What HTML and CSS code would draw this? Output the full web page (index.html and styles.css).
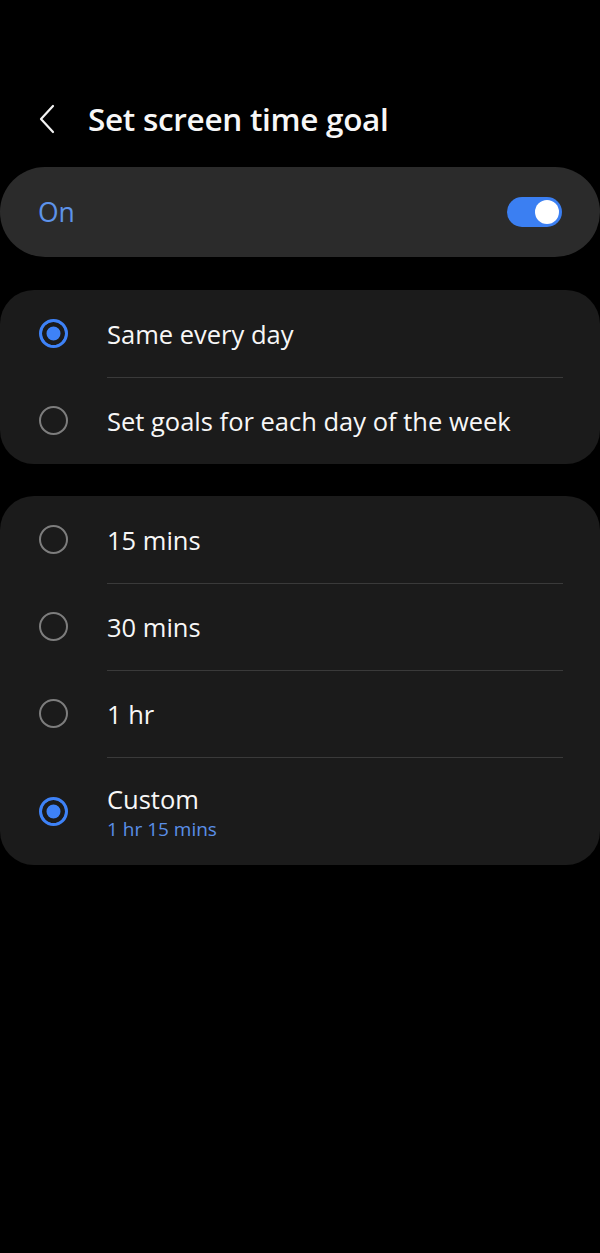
FILE: index.html
```html
<!DOCTYPE html>
<html lang="en">
<head>
    <meta charset="UTF-8">
    <meta name="viewport" content="width=device-width, initial-scale=1.0">
    <title>Set screen time goal</title>
    <link rel="stylesheet" href="styles.css">
</head>
<body>
    <div class="header">
        <svg class="back" width="20" height="30" viewBox="0 0 20 30">
            <path d="M15 2 L3 15 L15 28" fill="none" stroke="#f2f2f2" stroke-width="2.2" stroke-linecap="round" stroke-linejoin="round"/>
        </svg>
        <h1>Set screen time goal</h1>
    </div>

    <div class="master">
        <span class="master-label">On</span>
        <span class="switch"><span class="knob"></span></span>
    </div>

    <div class="card">
        <div class="row">
            <span class="radio checked"></span>
            <div class="label">Same every day</div>
        </div>
        <div class="row">
            <span class="radio"></span>
            <div class="label">Set goals for each day of the week</div>
        </div>
    </div>

    <div class="card">
        <div class="row">
            <span class="radio"></span>
            <div class="label">15 mins</div>
        </div>
        <div class="row">
            <span class="radio"></span>
            <div class="label">30 mins</div>
        </div>
        <div class="row">
            <span class="radio"></span>
            <div class="label">1 hr</div>
        </div>
        <div class="row tall">
            <span class="radio checked"></span>
            <div class="label">
                Custom
                <div class="sub">1 hr 15 mins</div>
            </div>
        </div>
    </div>
</body>
</html>
```

FILE: styles.css
```css
body {
    margin: 0;
    background-color: #000;
    color: #f7f7f7;
    font-family: "Open Sans", "Noto Sans", sans-serif;
}
.header {
    display: flex;
    align-items: center;
    height: 167px;
    padding-left: 38px;
    box-sizing: border-box;
    padding-top: 100px;
    padding-bottom: 30px;
}
.back {
    display: block;
    margin-right: 30px;
}
h1 {
    margin: 0;
    font-size: 31.5px;
    font-weight: 600;
    letter-spacing: -0.3px;
}
.master {
    display: flex;
    align-items: center;
    justify-content: space-between;
    height: 90px;
    background-color: #2b2b2b;
    border-radius: 45px;
    padding: 0 38px 0 38px;
}
.master-label {
    color: #5d93ea;
    font-size: 26.5px;
    font-weight: 500;
}
.switch {
    display: flex;
    align-items: center;
    justify-content: flex-end;
    width: 55px;
    height: 30px;
    border-radius: 15px;
    background-color: #3b7ff2;
    padding: 3px;
    box-sizing: border-box;
}
.knob {
    width: 24px;
    height: 24px;
    border-radius: 50%;
    background-color: #fff;
}
.card {
    margin-top: 33px;
    background-color: #1b1b1b;
    border-radius: 34px;
}
.card + .card {
    margin-top: 32px;
}
.row {
    display: flex;
    align-items: center;
    height: 87px;
    padding-left: 39px;
}
.row.tall {
    height: 108px;
}
.radio {
    flex: none;
    width: 29px;
    height: 29px;
    border: 2px solid #7d7d7d;
    border-radius: 50%;
    box-sizing: border-box;
    margin-right: 39px;
}
.radio.checked {
    border: 3px solid #3e82f7;
    background-color: #3e82f7;
    box-shadow: inset 0 0 0 4.5px #1b1b1b;
}
.label {
    flex: 1;
    align-self: stretch;
    display: flex;
    flex-direction: column;
    justify-content: center;
    margin-right: 37px;
    font-size: 25.5px;
    border-top: 1px solid #3a3a3a;
}
.row:first-child .label {
    border-top: none;
}
.sub {
    color: #5a8fe8;
    font-size: 19px;
    margin-top: 0;
}
```
